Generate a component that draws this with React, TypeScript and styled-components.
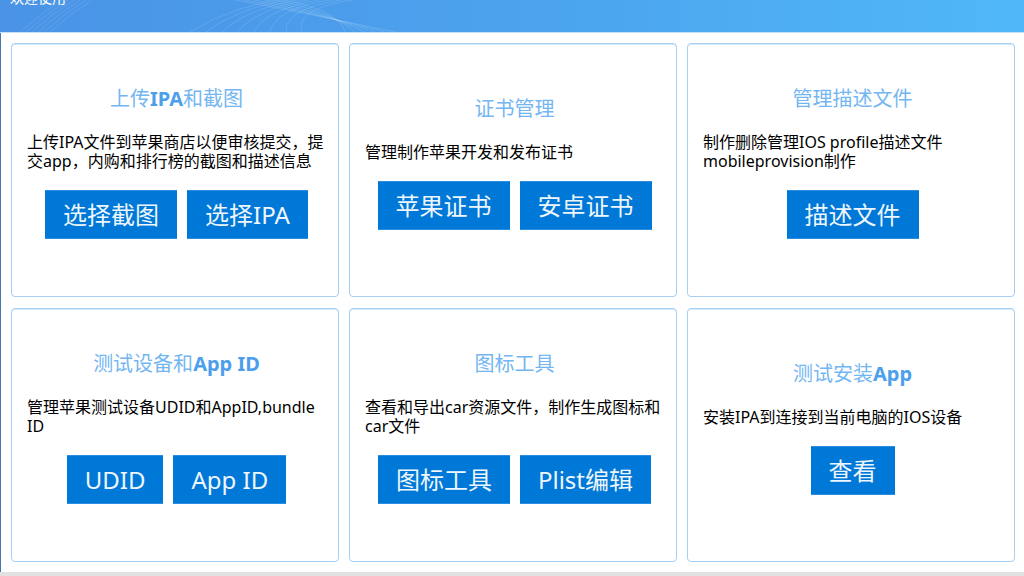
import React from 'react'
import styled, {createGlobalStyle} from 'styled-components'

const GlobalStyle = createGlobalStyle`
  html, body {
    margin: 0;
    padding: 0;
    background: #ffffff;
  }
  body {
    font-family: "Noto Sans", "Noto Sans CJK SC", sans-serif;
    overflow: hidden;
  }
`

interface ICard {
  title: React.ReactNode
  desc: string
  buttons: string[]
}

const cards: ICard[] = [
  {
    title: <>上传<b>IPA</b>和截图</>,
    desc: '上传IPA文件到苹果商店以便审核提交，提交app，内购和排行榜的截图和描述信息',
    buttons: ['选择截图', '选择IPA'],
  },
  {
    title: <>证书管理</>,
    desc: '管理制作苹果开发和发布证书',
    buttons: ['苹果证书', '安卓证书'],
  },
  {
    title: <>管理描述文件</>,
    desc: '制作删除管理IOS profile描述文件mobileprovision制作',
    buttons: ['描述文件'],
  },
  {
    title: <>测试设备和<b>App ID</b></>,
    desc: '管理苹果测试设备UDID和AppID,bundle ID',
    buttons: ['UDID', 'App ID'],
  },
  {
    title: <>图标工具</>,
    desc: '查看和导出car资源文件，制作生成图标和car文件',
    buttons: ['图标工具', 'Plist编辑'],
  },
  {
    title: <>测试安装<b>App</b></>,
    desc: '安装IPA到连接到当前电脑的IOS设备',
    buttons: ['查看'],
  },
]

const HeaderWaves: React.FC = () => (
  <Waves width="1024" height="32" viewBox="0 0 1024 32">
    <g fill="none" stroke="#ffffff" strokeWidth="1">
      {[0, 6, 12, 18, 24, 30].map(i => (
        <path key={'l' + i} d={`M${20 + i} 32 Q ${40 + i} 14 ${62 + i} 0`} opacity="0.12" />
      ))}
      {[0, 8, 16, 24, 32, 40, 48, 56].map(i => (
        <path key={'m' + i} d={`M${190 + i * 2} 32 Q ${235 + i} 4 ${300 + i * 1.5} -4`} opacity="0.12" />
      ))}
      {[0, 10, 20, 30, 40, 50].map(i => (
        <path key={'r' + i} d={`M${225 + i} -2 Q ${290 + i} 10 ${395 - i} 32`} opacity="0.14" />
      ))}
    </g>
  </Waves>
)

const App: React.FC = () => {
  return (
    <>
      <GlobalStyle />
      <Window>
        <Header>
          <HeaderWaves />
          <HeaderTitle>欢迎使用</HeaderTitle>
        </Header>
        <Main>
          {cards.map((card, i) => (
            <Card key={i}>
              <CardTitle>{card.title}</CardTitle>
              <CardDesc>{card.desc}</CardDesc>
              <ButtonRow>
                {card.buttons.map(b => (
                  <ActionButton key={b}>{b}</ActionButton>
                ))}
              </ButtonRow>
            </Card>
          ))}
        </Main>
        <Footer />
      </Window>
    </>
  )
}

const Window = styled.div`
  width: 1024px;
  height: 576px;
  display: flex;
  flex-direction: column;
  overflow: hidden;
  background: #ffffff;
`

const Header = styled.header`
  position: relative;
  flex: none;
  height: 32px;
  padding: 0 10px;
  display: flex;
  align-items: flex-start;
  overflow: hidden;
  border-bottom: 1px solid #c6e2fa;
  background: linear-gradient(90deg, #4a93e6 0%, #4ca4ee 55%, #50b8f8 100%);
`

const Waves = styled.svg`
  position: absolute;
  left: 0;
  top: 0;
`

const HeaderTitle = styled.span`
  position: relative;
  color: #ffffff;
  font-size: 14px;
  line-height: 14px;
  margin-top: -9px;
`

const Main = styled.main`
  flex: none;
  border-left: 1px solid #4677ae;
  padding: 10px 9px 10px 10px;
  display: grid;
  grid-template-columns: repeat(3, 328px);
  grid-template-rows: repeat(2, 254px);
  column-gap: 10px;
  row-gap: 11px;
`

const Card = styled.section`
  box-sizing: border-box;
  border: 1px solid #a6cff4;
  border-radius: 4px;
  box-shadow: inset 0 1px 0 #d6eafb;
  display: flex;
  flex-direction: column;
  align-items: center;
  justify-content: center;
  padding: 0 12px 16px 15px;
`

const CardTitle = styled.div`
  font-size: 20px;
  line-height: 28px;
  color: #74b6f2;
  margin-bottom: 20px;
  text-align: center;
  b {
    font-weight: 700;
    color: #4d9fec;
  }
`

const CardDesc = styled.div`
  align-self: stretch;
  font-size: 16px;
  line-height: 19px;
  color: #000000;
  margin-bottom: 19px;
`

const ButtonRow = styled.div`
  display: flex;
  gap: 10px;
`

const ActionButton = styled.button`
  box-sizing: border-box;
  height: 49px;
  padding: 0 18px;
  border: 0;
  border-top: 1px solid #2a8de0;
  border-bottom: 1px solid #2a8de0;
  background: #0078d7;
  color: #eef6fd;
  font-family: inherit;
  font-size: 24px;
  line-height: 47px;
  cursor: pointer;
`

const Footer = styled.div`
  flex: none;
  height: 4px;
  background: #e1e1e1;
`

export default App
